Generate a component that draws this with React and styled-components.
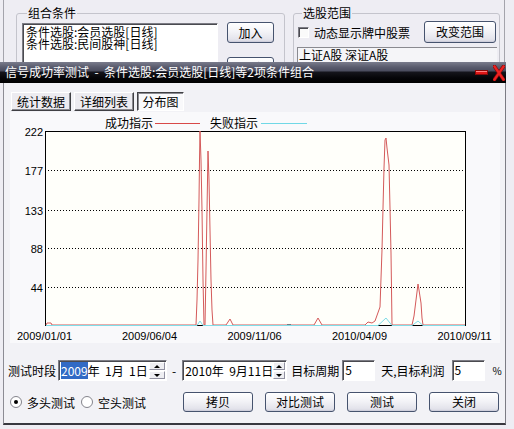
import React from 'react';
import styled, { createGlobalStyle, css } from 'styled-components';

const CJK = `"Noto Sans CJK SC", "Liberation Sans", sans-serif`;

const Global = createGlobalStyle`
  html, body { margin: 0; padding: 0; background: #eeedf3; }
  body { width: 514px; height: 429px; overflow: hidden; font-family: ${CJK}; font-size: 12px; color: #000; }
  * { box-sizing: border-box; }
`;

const Desktop = styled.div`
  position: relative;
  width: 514px;
  height: 429px;
  overflow: hidden;
  background: #eeedf3;
`;

/* ---------- back window ---------- */
const BackWindow = styled.div`
  margin-left: 3px;
  width: 502px;
  height: 62px;
  overflow: hidden;
  border-left: 1px solid #a4a4ac;
  border-right: 1px solid #a4a4ac;
  display: flex;
  align-items: flex-start;
  gap: 8px;
  padding: 5px 0 0 12px;
`;

const GroupBox = styled.fieldset`
  margin: 0;
  min-width: 0;
  width: ${p => p.$w}px;
  height: 120px;
  padding: ${p => p.$pad};
  border: 1px solid #c4c4cc;
  border-radius: 3px;
`;

const Legend = styled.legend`
  margin-left: 5px;
  padding: 0 1px;
  font-size: 12px;
  line-height: 16px;
  height: 16px;
`;

const GroupRow = styled.div`
  display: flex;
  align-items: ${p => p.$align || 'flex-start'};
  height: ${p => (p.$h ? `${p.$h}px` : 'auto')};
  margin-top: ${p => p.$mt || 0}px;
`;

const sunken = css`
  border-style: solid;
  border-width: 1px;
  border-color: #7c7c84 #ffffff #ffffff #7c7c84;
  box-shadow: inset 1px 1px 0 #4a4a50;
`;

const ListBox = styled.div`
  ${sunken};
  width: 196px;
  height: 70px;
  background: #fff;
  padding: 2px 0 0 3px;
  font-size: 12px;
`;

const ListItem = styled.div`
  height: 12px;
  line-height: 12px;
  white-space: nowrap;
`;

const ButtonColumn = styled.div`
  display: flex;
  flex-direction: column;
  gap: 14px;
  margin: -1px 0 0 9px;
`;

const XPButton = styled.button`
  width: ${p => p.$w}px;
  height: ${p => p.$h || 21}px;
  margin: 0;
  margin-left: ${p => p.$ml || 0}px;
  padding: 0;
  flex: none;
  border: 1px solid #46536e;
  border-radius: 3px;
  background: linear-gradient(#ffffff 0%, #f3f3f7 45%, #e4e4ec 85%, #d6d6e0 100%);
  font-family: ${CJK};
  font-size: 12px;
  line-height: 1;
  color: #000;
  box-shadow: inset 0 -1px 0 #cfcfdc, inset 0 1px 0 #ffffff;
`;

const CheckBox = styled.span`
  ${sunken};
  display: inline-block;
  width: 11px;
  height: 11px;
  margin-left: 1px;
  background: #fafafa;
  flex: none;
`;

const CheckLabel = styled.span`
  margin-left: 5px;
  font-size: 12px;
  white-space: nowrap;
`;

const RangeField = styled.div`
  width: 200px;
  height: 15px;
  border-top: 1px solid #8a8a90;
  border-left: 1px solid #8a8a90;
  background: #f5f5f8;
  padding-left: 1px;
  font-size: 12px;
  line-height: 14px;
  white-space: nowrap;
  overflow: hidden;
`;

/* ---------- dialog ---------- */
const Dialog = styled.div`
  position: absolute;
  left: 0;
  top: 62px;
  width: 506px;
  height: 363px;
  display: flex;
  flex-direction: column;
`;

const TitleBar = styled.div`
  flex: none;
  height: 21px;
  display: flex;
  align-items: center;
  justify-content: space-between;
  padding: 0 1px 0 5px;
  background: linear-gradient(to bottom, #7a7c8c 0px, #5a5c6e 5px, #4a4c5e 9px, #15151c 10px, #050508 16px, #000 21px);
  color: #fff;
`;

const TitleText = styled.span`
  font-size: 12px;
  line-height: 14px;
  white-space: pre;
  margin-top: -1px;
`;

const TitleControls = styled.div`
  display: flex;
  align-items: center;
  gap: 5px;
`;

const Body = styled.div`
  flex: 1;
  margin-left: 3px;
  background: #f2f2f6;
  border-left: 1px solid #8c8c94;
  border-right: 1px solid #7c7c84;
  border-bottom: 2px solid #38383f;
  display: flex;
  flex-direction: column;
  padding-top: 9px;
`;

const TabRow = styled.div`
  display: flex;
  gap: 3px;
  margin-left: 7px;
  height: 19px;
`;

const TabButton = styled.div`
  width: ${p => p.$w}px;
  height: 19px;
  display: flex;
  align-items: center;
  justify-content: center;
  font-size: 12px;
  border: 1px solid;
  ${p =>
    p.$active
      ? css`
          border-color: #404044 #ffffff #ffffff #404044;
          box-shadow: inset 1px 1px 0 #8a8a90;
          background: #f9f9fb;
        `
      : css`
          border-color: #ffffff #404044 #404044 #ffffff;
          box-shadow: inset -1px -1px 0 #8a8a90;
          background: #ecebf0;
        `}
`;

const ChartPanel = styled.div`
  margin: 1px 0 0 6px;
  width: 490px;
  height: 231px;
  background: #f9f9fb;
`;

const ChartSvg = styled.svg`
  display: block;
  width: 490px;
  height: 231px;
`;

const ControlRow = styled.div`
  display: flex;
  align-items: ${p => p.$align || 'center'};
  height: ${p => p.$h}px;
  margin-top: ${p => p.$mt}px;
  padding-left: ${p => p.$pl || 0}px;
`;

const Label = styled.span`
  flex: none;
  margin-left: ${p => p.$ml || 0}px;
  font-size: ${p => p.$size || 12}px;
  white-space: nowrap;
`;

const DateBox = styled.div`
  ${sunken};
  flex: none;
  width: ${p => p.$w}px;
  height: 21px;
  margin-left: ${p => p.$ml || 0}px;
  background: #fff;
  display: flex;
  align-items: center;
  padding: 0 0 0 2px;
  font-size: 12px;
  white-space: pre;
`;

const Selected = styled.span`
  background: #316ac5;
  color: #fff;
`;

const Spin = styled.div`
  margin-left: auto;
  width: 16px;
  height: 17px;
  display: flex;
  flex-direction: column;
  gap: 1px;
  margin-right: 1px;
`;

const SpinHalf = styled.div`
  flex: 1;
  display: flex;
  align-items: center;
  justify-content: center;
  background: #eeeef2;
  border: 1px solid;
  border-color: #ffffff #9090a0 #9090a0 #ffffff;
  &::after {
    content: '';
    width: 0;
    height: 0;
    border-left: 3px solid transparent;
    border-right: 3px solid transparent;
    ${p => (p.$up ? 'border-bottom: 3px solid #000;' : 'border-top: 3px solid #000;')}
  }
`;

const NumInput = styled.div`
  ${sunken};
  flex: none;
  width: 33px;
  height: 21px;
  margin-left: ${p => p.$ml || 0}px;
  background: #fff;
  padding-left: 2px;
  font-size: 12px;
  line-height: 17px;
`;

const RadioItem = styled.label`
  display: flex;
  align-items: center;
  gap: 5px;
  margin-left: ${p => p.$ml || 0}px;
  height: 14px;
  margin-bottom: 3px;
  font-size: 12px;
  white-space: nowrap;
`;

const RadioDot = styled.span`
  width: 12px;
  height: 12px;
  border-radius: 50%;
  border: 1px solid #84848c;
  background: #fff;
  display: flex;
  align-items: center;
  justify-content: center;
  flex: none;
  &::after {
    content: '';
    width: 4px;
    height: 4px;
    border-radius: 50%;
    background: ${p => (p.$on ? '#000' : 'transparent')};
  }
`;

const ButtonGroup = styled.div`
  display: flex;
  gap: 12px;
  margin-left: auto;
  margin-right: 6px;
`;

/* ---------- chart data ---------- */
const yTicks = [
  { v: '177', y: 170.5 },
  { v: '133', y: 210.5 },
  { v: '88', y: 248.5 },
  { v: '44', y: 287.5 },
];
const xTicks = ['2009/01/01', '2009/06/04', '2009/11/06', '2010/04/09', '2010/09/11'];

const redPath =
  'M46,325 L47,323 L51,323 L52,325 L196,325 L197,300 L198,260 L199,200 L199.5,160 L200,131 L201,160 L202,210 L203,280 L204,325 L205,325 L206,270 L207,210 L208,151 L209,180 L210,230 L211,280 L212,310 L213,325 L226,325 L230,319 L233,325 L314,325 L318,318 L322,325 L365,325 L368,322 L372,323 L375,321 L380,307 L382,250 L383,208 L384,168 L385,140 L386,138 L387,148 L389,165 L390,208 L391,253 L392,325 L412,325 L414,316 L416,300 L418,284 L419,290 L421,303 L422,318 L423,325 L465,325';

const cyanPath =
  'M46,325.5 L197,325.5 L200,321 L203,325.5 L378,325.5 L386,318 L392,325.5 L412,325.5 L418,321 L423,325.5 L465,325.5';

const NUM_FONT = '"Liberation Sans", Arial, sans-serif';

function Chart() {
  return (
    <ChartSvg viewBox="10 112 490 231">
      <text x="105" y="128" fontSize="12" fontFamily={CJK} fill="#000">成功指示</text>
      <rect x="155" y="123" width="45" height="1" fill="#d84848" />
      <text x="210" y="128" fontSize="12" fontFamily={CJK} fill="#000">失败指示</text>
      <rect x="261" y="123" width="46" height="1" fill="#70d8e6" />

      <rect x="45.5" y="131.5" width="420" height="194" fill="#fffffa" stroke="#000" strokeWidth="1" />
      {yTicks.map(t => (
        <line key={t.v} x1="48" y1={t.y} x2="465" y2={t.y} stroke="#000" strokeWidth="1" strokeDasharray="1 2" />
      ))}
      <text x="43" y="135.5" fontSize="11" fontFamily={NUM_FONT} textAnchor="end">222</text>
      {yTicks.map(t => (
        <text key={t.v} x="43" y={t.y + 4} fontSize="11" fontFamily={NUM_FONT} textAnchor="end">
          {t.v}
        </text>
      ))}
      {xTicks.map((t, i) => (
        <text key={t} x={44.5 + 105 * i} y="340" fontSize="11" fontFamily={NUM_FONT} textAnchor="middle">
          {t}
        </text>
      ))}
      <path d={redPath} fill="none" stroke="#d45a5a" strokeWidth="1" />
      <line x1="287" y1="324.5" x2="291" y2="324.5" stroke="#7a7a80" strokeWidth="1" />
      <path d={cyanPath} fill="none" stroke="#7fdde8" strokeWidth="1" />
    </ChartSvg>
  );
}

function MinIcon() {
  return (
    <svg width="13" height="6" viewBox="0 0 13 6">
      <rect x="0.5" y="0.5" width="12" height="4" fill="#e01818" stroke="#8a0a0a" />
      <line x1="1" y1="1.5" x2="12" y2="1.5" stroke="#ff8080" />
    </svg>
  );
}

function CloseIcon() {
  return (
    <svg width="12" height="16" viewBox="0 0 12 16">
      <path d="M1.5 1.5 L10.5 14.5 M10.5 1.5 L1.5 14.5" stroke="#8a0a0a" strokeWidth="3.6" strokeLinecap="square" />
      <path d="M1.5 1.5 L10.5 14.5 M10.5 1.5 L1.5 14.5" stroke="#ee2222" strokeWidth="2.2" strokeLinecap="square" />
    </svg>
  );
}

export default function App() {
  return (
    <>
      <Global />
      <Desktop>
        <BackWindow>
          <GroupBox $w={269} $pad="2px 0 0 5px">
            <Legend>组合条件</Legend>
            <GroupRow>
              <ListBox>
                <ListItem>条件选股:会员选股[日线]</ListItem>
                <ListItem>条件选股:民间股神[日线]</ListItem>
              </ListBox>
              <ButtonColumn>
                <XPButton $w={47}>加入</XPButton>
                <XPButton $w={47}>删除</XPButton>
              </ButtonColumn>
            </GroupRow>
          </GroupBox>
          <GroupBox $w={207} $pad="0 0 0 3px">
            <Legend>选股范围</Legend>
            <GroupRow $align="center" $h={22}>
              <CheckBox />
              <CheckLabel>动态显示牌中股票</CheckLabel>
              <XPButton $w={72} $ml={14} $h={22}>改变范围</XPButton>
            </GroupRow>
            <GroupRow $mt={4}>
              <RangeField>上证A股 深证A股</RangeField>
            </GroupRow>
          </GroupBox>
        </BackWindow>

        <Dialog>
          <TitleBar>
            <TitleText>{'信号成功率测试  -  条件选股:会员选股[日线]等2项条件组合'}</TitleText>
            <TitleControls>
              <MinIcon />
              <CloseIcon />
            </TitleControls>
          </TitleBar>
          <Body>
            <TabRow>
              <TabButton $w={60}>统计数据</TabButton>
              <TabButton $w={60}>详细列表</TabButton>
              <TabButton $w={47} $active>分布图</TabButton>
            </TabRow>
            <ChartPanel>
              <Chart />
            </ChartPanel>
            <ControlRow $h={21} $mt={17} $pl={4}>
              <Label>测试时段</Label>
              <DateBox $w={109} $ml={2}>
                <Selected>2009</Selected>
                {'年  1月  1日'}
                <Spin>
                  <SpinHalf $up />
                  <SpinHalf />
                </Spin>
              </DateBox>
              <Label $ml={5}>-</Label>
              <DateBox $w={105} $ml={6}>
                {'2010年  9月11日'}
                <Spin>
                  <SpinHalf $up />
                  <SpinHalf />
                </Spin>
              </DateBox>
              <Label $ml={4}>目标周期</Label>
              <NumInput $ml={3}>5</NumInput>
              <Label $ml={6}>天,目标利润</Label>
              <NumInput $ml={7}>5</NumInput>
              <Label $ml={8} $size={10}>%</Label>
            </ControlRow>
            <ControlRow $h={20} $mt={11} $align="flex-end">
              <RadioItem $ml={6}>
                <RadioDot $on />
                多头测试
              </RadioItem>
              <RadioItem $ml={6}>
                <RadioDot />
                空头测试
              </RadioItem>
              <ButtonGroup>
                <XPButton $w={70} $h={20}>拷贝</XPButton>
                <XPButton $w={70} $h={20}>对比测试</XPButton>
                <XPButton $w={70} $h={20}>测试</XPButton>
                <XPButton $w={70} $h={20}>关闭</XPButton>
              </ButtonGroup>
            </ControlRow>
          </Body>
        </Dialog>
      </Desktop>
    </>
  );
}
